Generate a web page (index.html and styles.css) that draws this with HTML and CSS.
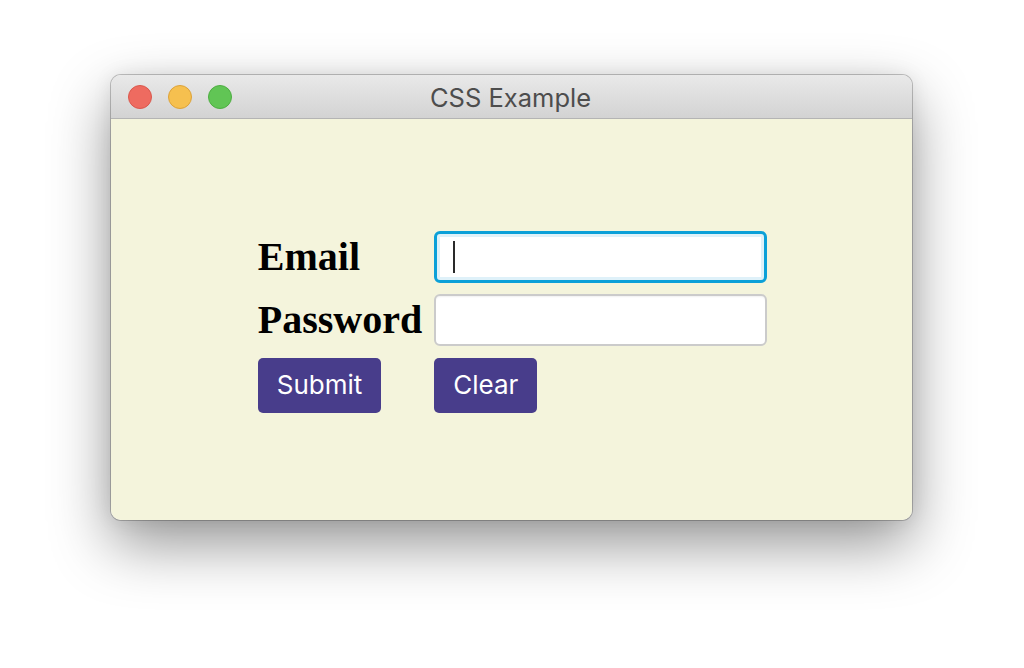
FILE: index.html
```html
<!DOCTYPE html>
<html lang="en">
<head>
<meta charset="utf-8">
<title>CSS Example</title>
<link rel="stylesheet" href="styles.css">
</head>
<body>
  <div class="window">
    <div class="titlebar">
      <div class="lights">
        <span class="light red"></span>
        <span class="light yellow"></span>
        <span class="light green"></span>
      </div>
      <div class="title">CSS Example</div>
    </div>
    <div class="content">
      <form class="form">
        <label class="label" for="email">Email</label>
        <div class="field focused"><span class="caret"></span></div>
        <label class="label" for="password">Password</label>
        <div class="field"></div>
        <button type="button" class="btn">Submit</button>
        <button type="button" class="btn">Clear</button>
      </form>
    </div>
  </div>
</body>
</html>
```

FILE: styles.css
```css
html, body {
  margin: 0;
  padding: 0;
  background: #ffffff;
  width: 1024px;
  height: 668px;
  overflow: hidden;
}

body {
  padding: 75px 0 0 111px;
  box-sizing: border-box;
}

.window {
  width: 801px;
  height: 445px;
  border-radius: 10px;
  overflow: hidden;
  box-shadow: 0 0 0 1px rgba(0, 0, 0, 0.22), 0 24px 60px rgba(0, 0, 0, 0.42), 0 0 20px rgba(0, 0, 0, 0.08);
  display: flex;
  flex-direction: column;
}

.titlebar {
  height: 44px;
  box-sizing: border-box;
  background: linear-gradient(#e9e9e9, #d3d3d3);
  border-bottom: 1px solid #b4b4b4;
  display: flex;
  align-items: center;
  position: relative;
}

.lights {
  display: flex;
  gap: 16px;
  padding-left: 17px;
  position: relative;
  z-index: 1;
}

.light {
  width: 24px;
  height: 24px;
  border-radius: 50%;
  box-sizing: border-box;
}
.red { background: #ee6b60; border: 1px solid #d9584d; }
.yellow { background: #f6c04f; border: 1px solid #dca23a; }
.green { background: #61c555; border: 1px solid #4ead42; }

.title {
  position: absolute;
  left: 0;
  right: 0;
  top: 0;
  bottom: 0;
  display: flex;
  align-items: center;
  justify-content: center;
  padding-top: 2px;
  padding-right: 2px;
  font-family: Inter, "Liberation Sans", sans-serif;
  font-size: 25.5px;
  color: #4d4d4d;
}

.content {
  flex: 1;
  background: #f4f4dc;
  display: flex;
  align-items: center;
  justify-content: center;
  padding-top: 4px;
  padding-left: 2px;
}

.form {
  display: grid;
  grid-template-columns: auto 333px;
  grid-template-rows: 52px 52px 55px;
  column-gap: 12px;
  row-gap: 11.5px;
  align-items: center;
}

.label {
  font-family: "Liberation Serif", "Times New Roman", serif;
  font-weight: bold;
  font-size: 40px;
  color: #000;
  line-height: 1;
}

.field {
  height: 52px;
  box-sizing: border-box;
  background: #fff;
  border: 2px solid #cbcbcb;
  border-radius: 6px;
  box-shadow: inset 0 2px 2px -1px rgba(0, 0, 0, 0.06);
  display: flex;
  align-items: center;
  padding-left: 17px;
}

.field.focused {
  border: 3px solid #0ba0d8;
  box-shadow: inset 0 0 0 3px #dff1f9;
  padding-left: 16px;
}

.caret {
  width: 2px;
  height: 32px;
  background: #2a2a2a;
}

.btn {
  justify-self: start;
  height: 55px;
  padding: 0 19px;
  border: none;
  border-radius: 5px;
  background: #483d8b;
  color: #fff;
  font-family: Inter, "Liberation Sans", sans-serif;
  font-size: 26px;
  line-height: 1;
}
```
